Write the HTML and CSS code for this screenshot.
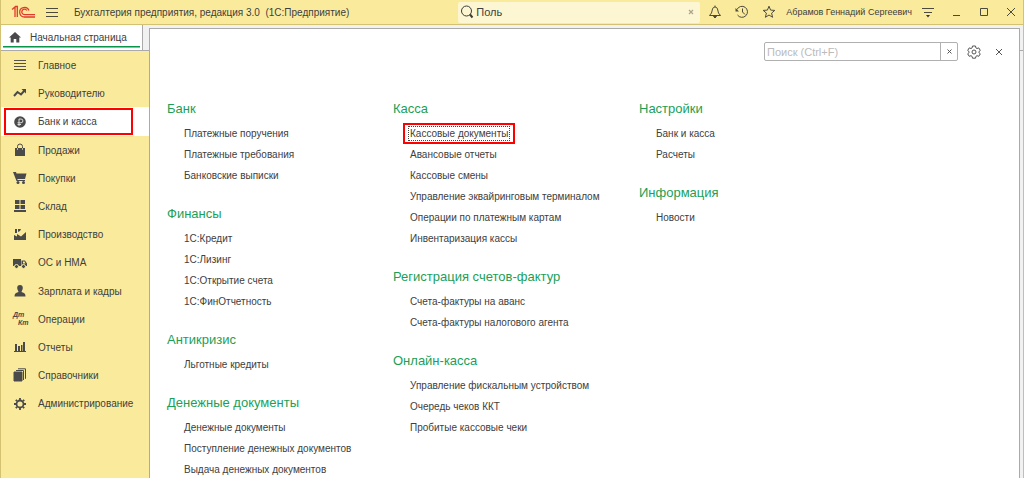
FILE: index.html
```html
<!DOCTYPE html>
<html lang="ru">
<head>
<meta charset="utf-8">
<title>Бухгалтерия предприятия</title>
<link rel="stylesheet" href="styles.css">
</head>
<body>
<div class="window">
<header class="titlebar">
  <svg class="logo" width="25" height="14" viewBox="0 0 25 14" fill="none" stroke="#e03a2c" stroke-width="1.3"><path d="M1 4.500 4 2v10M6.300 12V1.500H5L1.500 4M18 5.500A4.800 4.800 0 1 0 13.500 12H24M15.800 5.500A2.700 2.700 0 1 0 13.500 9.600H24"/></svg>
  <button class="icon-btn menu-btn" aria-label="Меню"><svg width="12" height="11" viewBox="0 0 12 11" stroke="#4c4a3c"><path d="M0 1.500h12M0 5.500h12M0 9.500h12"/></svg></button>
  <h1 class="title">Бухгалтерия предприятия, редакция 3.0&nbsp; (1С:Предприятие)</h1>
  <div class="global-search">
    <svg width="14" height="14" viewBox="0 0 14 14" fill="none" stroke="#3c3c36"><circle cx="6.500" cy="6" r="5"/><path d="m10 9.500 2.500 3" stroke-width="2"/></svg>
    <input class="global-input" type="text" value="Поль" aria-label="Глобальный поиск">
    <button class="icon-btn clear" aria-label="Очистить"><svg width="6" height="6" viewBox="0 0 6 6" stroke="#aaa48e" stroke-width="1.200"><path d="m1 1 4 4M5 1 1 5"/></svg></button>
  </div>
  <div class="tools">
    <button class="icon-btn" aria-label="Уведомления"><svg width="14" height="14" viewBox="0 0 14 14" fill="none" stroke="#4c4a3c"><path d="M1.500 10.500h11L10.500 8 9.500 4Q9 2 7 2T4.500 4l-1 4zM7 2V.5"/><path d="M5.500 11.500h3L7 13z" fill="#333"/></svg></button>
    <button class="icon-btn" aria-label="История"><svg width="14" height="14" viewBox="0 0 14 14" fill="none" stroke="#4c4a3c"><path d="M2 4.500a5.500 5.500 0 1 1 .5 5.500M7.500 3.500V7L10 9.500"/><path d="M.5 3v3.500H4z" fill="#4c4a3c" stroke="none"/></svg></button>
    <button class="icon-btn" aria-label="Избранное"><svg width="14" height="14" viewBox="0 0 14 14" fill="none" stroke="#4c4a3c"><path d="m7 1.200 1.600 3.900 4.200.3-3.200 2.700 1 4.200L7 10l-3.600 2.300 1-4.200L1.200 5.400l4.200-.3z"/></svg></button>
  </div>
  <span class="user">Абрамов Геннадий Сергеевич</span>
  <div class="window-tools">
    <button class="icon-btn" aria-label="Сервис"><svg width="12" height="12" viewBox="0 0 12 12" stroke="#4c4a3c"><path d="M0 2.500h12M2 6.500h8"/><path d="M4 9h4l-2 2.500z" fill="#333" stroke="none"/></svg></button>
    <button class="icon-btn" aria-label="Свернуть"><svg width="8" height="10" viewBox="0 0 8 10" stroke="#4c4a3c"><path d="M0 8.500h7"/></svg></button>
    <button class="icon-btn" aria-label="Развернуть"><svg width="8" height="8" viewBox="0 0 8 8" fill="none" stroke="#4c4a3c"><path d="M.5.5h7v7h-7z"/></svg></button>
    <button class="icon-btn" aria-label="Закрыть"><svg width="8" height="8" viewBox="0 0 8 8" stroke="#4c4a3c"><path d="m0 0 8 8M8 0 0 8"/></svg></button>
  </div>
</header>
<div class="workspace">
  <div class="left">
    <a class="tab" href="#"><svg width="12" height="11" viewBox="0 0 12 11" fill="#4a4a4a"><path d="m6 0 6 5.500h-1.700V10.500H7.300V7H4.700v3.500h-3V5.500H0z"/></svg><span>Начальная страница</span></a>
    <nav class="sidebar">
      <a class="section" href="#"><svg viewBox="0 0 14 14" stroke="#55524a"><path d="M1 2.500h12M1 5.500h12M1 8.500h12M1 11.500h12"/></svg>Главное</a>
      <a class="section" href="#"><svg viewBox="0 0 14 14" fill="none" stroke="#4a4a4a" stroke-width="2"><path d="m1 10 3.500-4L8 8.500l4-4.500"/><path d="M8.500 3H13v4.500z" fill="#4a4a4a" stroke="none"/></svg>Руководителю</a>
      <a class="section active" href="#"><svg viewBox="0 0 14 14"><circle cx="7" cy="7" r="5.800" fill="#4a4a4a"/><path d="M6 11V4h2a1.800 1.800 0 0 1 0 3.800H4.500M4.500 9.500H8" fill="none" stroke="#ddd"/></svg>Банк и касса</a>
      <a class="section" href="#"><svg viewBox="0 0 14 14"><path d="M2 5h10v8H2z" fill="#4a4a4a"/><path d="M4.500 7V3.500a2.500 2.500 0 0 1 5 0V7" fill="none" stroke="#4a4a4a"/><path d="M4.500 5v2M9.500 5v2" stroke="#bbb48c"/></svg>Продажи</a>
      <a class="section" href="#"><svg viewBox="0 0 14 14" fill="#4a4a4a"><path d="M0 1h3l.5 1.500H13.500L12 8H4.500v1H12v1H3.500z"/><circle cx="5" cy="11.500" r="1.500"/><circle cx="10.500" cy="11.500" r="1.500"/></svg>Покупки</a>
      <a class="section" href="#"><svg viewBox="0 0 14 14" fill="#4a4a4a"><path d="M2 1h4.500v4H2zM7.500 1H12v4H7.500zM2 6h4.500v4H2zM7.500 6H12v4H7.500zM1 11h12v2H1z"/></svg>Склад</a>
      <a class="section" href="#"><svg viewBox="0 0 14 14" fill="#4a4a4a"><path d="M1 13V8l3 1.500V7l4 2.500L13 5v8zM2 6V2h2v4zM5 5V2h3l-1 2z"/></svg>Производство</a>
      <a class="section" href="#"><svg viewBox="0 0 14 14" fill="#4a4a4a"><path d="M0 3h8v7H0z"/><path d="M8.500 4.500H12l2 3V10H8.500zM10 5.500v2h2.500l-1-2z" fill-rule="evenodd"/><g stroke="#faeb9c"><circle cx="3.500" cy="10.500" r="2"/><circle cx="10.500" cy="10.500" r="2"/></g></svg>ОС и НМА</a>
      <a class="section" href="#"><svg viewBox="0 0 14 14" fill="#4a4a4a"><path d="M7 1c2 0 2.800 1.300 2.800 3S8.500 7 8.500 8c3 .8 4 2 4 4.500h-11C1.500 10 2.500 8.800 5.500 8c0-1-1.300-2.300-1.300-4S5 1 7 1z"/></svg>Зарплата и кадры</a>
      <a class="section" href="#"><svg viewBox="0 0 14 14" fill="#4a4a4a" class="dtkt"><text x="0" y="5">Дт</text><text x="5" y="13">Кт</text></svg>Операции</a>
      <a class="section" href="#"><svg viewBox="0 0 14 14" fill="#4a4a4a"><path d="M2 4h2v7H2zM5 6h2v5H5zM8 5h1.500v6H8zM10 2h2v9h-2zM1 11h12v1H1z"/></svg>Отчеты</a>
      <a class="section" href="#"><svg viewBox="0 0 14 14" fill="none" stroke="#4a4a4a"><path d="M1 4h8v9H1z" fill="#4a4a4a"/><path d="M3 2.500h7.500V12M5 .8h7.500v10"/></svg>Справочники</a>
      <a class="section" href="#"><svg viewBox="0 0 14 14" fill="none" stroke="#4a4a4a"><circle cx="7" cy="7" r="3.500" stroke-width="1.800"/><path d="M7 1v2M7 11v2M1 7h2M11 7h2M2.800 2.800l1.300 1.300M9.900 9.900l1.300 1.300M2.800 11.200l1.300-1.300M9.900 4.100l1.300-1.300" stroke-width="1.800"/></svg>Администрирование</a>
    </nav>
  </div>
  <main class="panel">
    <div class="panel-tools">
      <div class="search"><input class="search-input" type="text" placeholder="Поиск (Ctrl+F)" aria-label="Поиск"><button class="search-clear" aria-label="Очистить поиск"><svg width="5" height="5" viewBox="0 0 5 5" stroke="#555"><path d="m.5.5 4 4M4.500.5l-4 4"/></svg></button></div>
      <button class="icon-btn" aria-label="Настройка"><svg width="14" height="14" viewBox="0 0 14 14" fill="none" stroke="#555"><path d="M5.500 1h3l.4 1.900 1.100.6 1.800-.6 1.500 2.600L11.900 6.700v.9l1.400 1.200-1.500 2.500-1.800-.6-1.100.7-.4 1.800h-3l-.4-1.800-1.100-.7-1.800.6L.7 8.800l1.400-1.200v-.9L.7 5.500l1.500-2.600 1.800.6 1.100-.6z"/><circle cx="7" cy="7" r="2"/></svg></button>
      <button class="icon-btn" aria-label="Закрыть панель"><svg width="6" height="6" viewBox="0 0 6 6" stroke="#555"><path d="m0 0 6 6M6 0 0 6"/></svg></button>
    </div>
    <div class="columns">
      <div class="column">
        <section class="group"><h2>Банк</h2><a href="#">Платежные поручения</a><a href="#">Платежные требования</a><a href="#">Банковские выписки</a></section>
        <section class="group"><h2>Финансы</h2><a href="#">1С:Кредит</a><a href="#">1С:Лизинг</a><a href="#">1С:Открытие счета</a><a href="#">1С:ФинОтчетность</a></section>
        <section class="group"><h2>Антикризис</h2><a href="#">Льготные кредиты</a></section>
        <section class="group"><h2>Денежные документы</h2><a href="#">Денежные документы</a><a href="#">Поступление денежных документов</a><a href="#">Выдача денежных документов</a></section>
      </div>
      <div class="column">
        <section class="group"><h2>Касса</h2><a class="current" href="#">Кассовые документы</a><a href="#">Авансовые отчеты</a><a href="#">Кассовые смены</a><a href="#">Управление эквайринговым терминалом</a><a href="#">Операции по платежным картам</a><a href="#">Инвентаризация кассы</a></section>
        <section class="group"><h2>Регистрация счетов-фактур</h2><a href="#">Счета-фактуры на аванс</a><a href="#">Счета-фактуры налогового агента</a></section>
        <section class="group"><h2>Онлайн-касса</h2><a href="#">Управление фискальным устройством</a><a href="#">Очередь чеков ККТ</a><a href="#">Пробитые кассовые чеки</a></section>
      </div>
      <div class="column">
        <section class="group"><h2>Настройки</h2><a href="#">Банк и касса</a><a href="#">Расчеты</a></section>
        <section class="group"><h2>Информация</h2><a href="#">Новости</a></section>
      </div>
    </div>
  </main>
  <div class="edge"></div>
</div>
</div>
</body>
</html>
```
FILE: styles.css
```css
*, *::before, *::after { box-sizing: border-box; }
body { margin: 0; font-family: "Liberation Sans", Arial, sans-serif; font-size: 10px; color: #404040; }
a { color: inherit; text-decoration: none; }
svg { display: block; flex: none; }
input, button { font: inherit; color: inherit; padding: 0; margin: 0; border: 0; background: none; outline: 0; }
.window { display: flex; flex-direction: column; height: 100vh; overflow: hidden; border-left: 1px solid #d3c271; border-right: 1px solid #d3c271; }
.titlebar { flex: none; display: flex; align-items: center; height: 25px; background: #faeb9c; border-bottom: 1px solid #d3c271; padding: 0 8px 0 10px; }
.icon-btn { display: flex; align-items: center; justify-content: center; }
.menu-btn { margin-left: 10px; }
.title { margin: 0 0 0 16px; flex: 1; font-size: 10px; font-weight: normal; white-space: nowrap; }
.global-search { display: flex; align-items: center; width: 242px; height: 21px; padding: 0 6px 0 2px; background: #fdf6d3; border-radius: 2px; }
.global-input { flex: 1; min-width: 0; margin-left: 2px; font-size: 11px; }
.tools { display: flex; gap: 13px; margin-left: 8px; }
.user { margin-left: 10px; font-size: 9px; white-space: nowrap; }
.window-tools { display: flex; align-items: center; gap: 19px; margin-left: 10px; }
.workspace { flex: 1; min-height: 0; display: flex; background: #f1f1f1; }
.left { flex: none; width: 148px; display: flex; flex-direction: column; }
.tab { position: relative; flex: none; display: flex; align-items: center; gap: 9px; width: 142px; height: 25px; padding-left: 8px; background: #fff; border-right: 1px solid #aaa; white-space: nowrap; }
.tab::after { content: ""; position: absolute; left: 2px; right: 2px; bottom: 2px; height: 1px; box-sizing: content-box; background: #0a9648; border-bottom: 1px solid #7cc79b; }
.sidebar { flex: 1; min-height: 0; background: #faeb9c; border-top: 1px solid #aaa; }
.section { display: flex; align-items: center; gap: 11px; height: 28px; padding-left: 12px; white-space: nowrap; }
.section:nth-child(5n+3) { height: 29px; }
.section svg { width: 14px; height: 14px; }
.section.active { background: #fff; position: relative; }
.section.active::after { content: ""; position: absolute; left: 3px; top: 1px; width: 129px; height: 27px; border: 2px solid #ff0000; }
.dtkt { font-size: 7px; font-weight: bold; font-style: italic; overflow: visible; }
.panel { flex: 1; min-width: 0; margin-top: 3px; background: #fff; border: 1px solid #aaa; border-bottom: 0; overflow: hidden; }
.panel-tools { display: flex; justify-content: flex-end; align-items: center; padding: 13px 17px 0 0; gap: 15px; }
.search { display: flex; width: 194px; height: 19px; border: 1px solid #b0b0b0; border-radius: 2px; margin-right: -6px; }
.search-input { flex: 1; min-width: 0; padding-left: 2px; font-size: 11px; }
.search-input::placeholder { color: #bbb; }
.search-clear { display: flex; align-items: center; justify-content: center; width: 17px; border-left: 1px solid #b0b0b0; }
.columns { display: grid; grid-template-columns: 226px 246px 1fr; padding: 37px 17px 0; }
.column { display: flex; flex-direction: column; gap: 17px; }
.group { display: flex; flex-direction: column; align-items: flex-start; }
.group h2 { margin: 0 0 4px; font-size: 13px; font-weight: normal; line-height: 21px; color: #1ba057; white-space: nowrap; }
.group a { margin-left: 17px; line-height: 21px; white-space: nowrap; }
.group .current { position: relative; }
.current::before { content: ""; position: absolute; inset: 3px -2px; border: 1px dotted #444; }
.current::after { content: ""; position: absolute; inset: 0 -7px; border: 2px solid #ff0000; }
.edge { flex: none; width: 3px; height: 26px; border-bottom: 1px solid #aaa; }
```
